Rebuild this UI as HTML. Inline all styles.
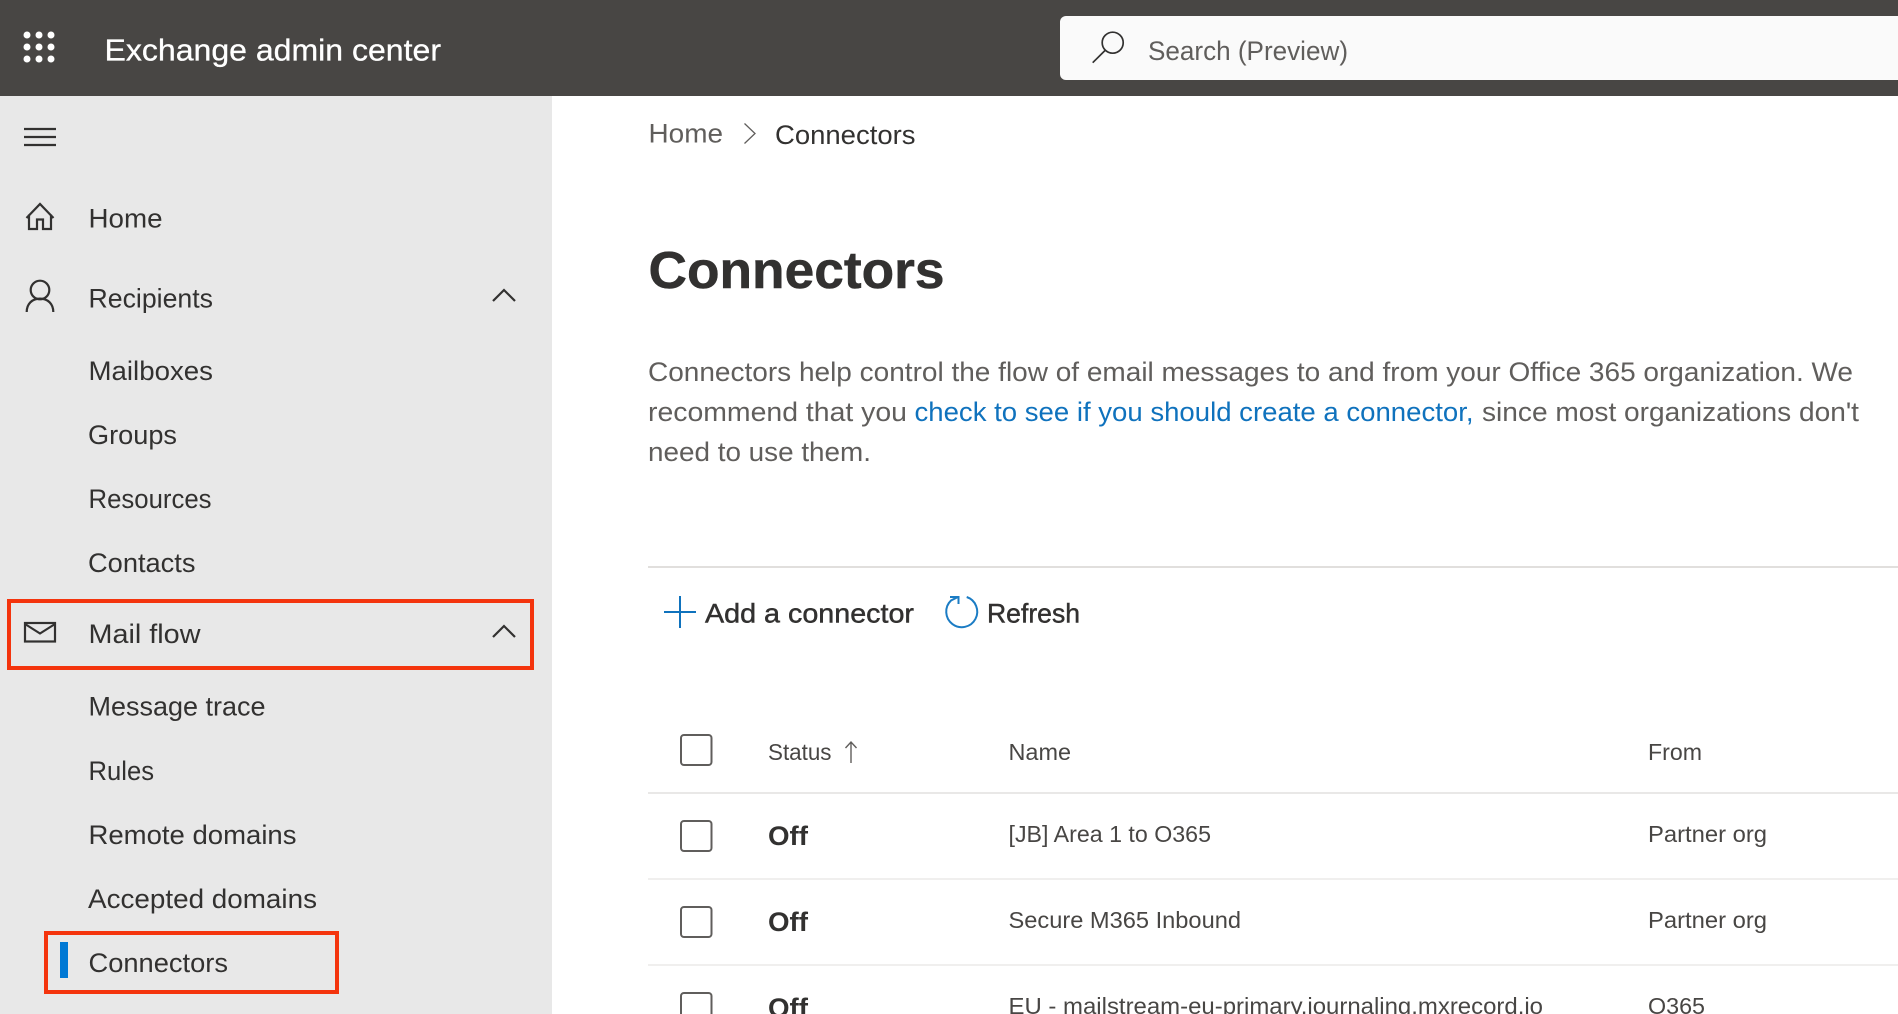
<!DOCTYPE html>
<html><head><meta charset="utf-8"><title>Exchange admin center</title>
<style>
html,body{margin:0;padding:0;background:#fff;width:1898px;height:1014px;overflow:hidden}
svg{display:block;position:absolute;left:0;top:0;filter:blur(.35px)}
text{font-family:"Liberation Sans",sans-serif;white-space:pre}
.n{font-size:27px;fill:#323130}
.p{font-size:26.5px;fill:#605e5c}
.t{font-size:23.5px;fill:#484644}
.s{font-size:27px;fill:#323130;stroke:#323130;stroke-width:.45}
.i{fill:none;stroke:#323130;stroke-width:2.2}
</style></head><body>
<svg width="1898" height="1014" viewBox="0 0 1898 1014" xmlns="http://www.w3.org/2000/svg">
<rect width="1898" height="1014" fill="#fff"/>
<rect width="1898" height="96" fill="#484644"/>
<rect y="96" width="552" height="918" fill="#e8e8e8"/>
<g fill="#fff"><circle cx="27" cy="35" r="3.5"/><circle cx="39" cy="35" r="3.5"/><circle cx="51" cy="35" r="3.5"/><circle cx="27" cy="47" r="3.5"/><circle cx="39" cy="47" r="3.5"/><circle cx="51" cy="47" r="3.5"/><circle cx="27" cy="59" r="3.5"/><circle cx="39" cy="59" r="3.5"/><circle cx="51" cy="59" r="3.5"/></g>
<text x="104.5" y="60.5" font-size="31" fill="#fff" stroke="#fff" stroke-width=".3" textLength="336.5" lengthAdjust="spacingAndGlyphs">Exchange admin center</text>
<path d="M1898 16H1066a6 6 0 0 0-6 6v52a6 6 0 0 0 6 6h832z" fill="#fafafa"/>
<circle cx="1112.7" cy="42.7" r="10.5" fill="none" stroke="#323130" stroke-width="1.7"/>
<path d="M1105 50.5L1092.7 62.7" fill="none" stroke="#323130" stroke-width="1.7"/>
<text x="1148" y="60" font-size="27" fill="#605e5c" textLength="200" lengthAdjust="spacingAndGlyphs">Search (Preview)</text>

<path d="M24 129H56M24 137H56M24 145H56" class="i"/>
<path d="M26.5 218L40 204L53.5 218M29 214.5V229H37V219.5H43V229H51V214.5" class="i"/>
<text class="n" x="88.5" y="227.5" textLength="74" lengthAdjust="spacingAndGlyphs">Home</text>
<circle cx="40" cy="290" r="9.3" class="i"/>
<path d="M26.7 312C26.7 304 32 298.6 40 298.6C48 298.6 53.3 304 53.3 312" class="i"/>
<text class="n" x="88.5" y="307.5" textLength="124.5" lengthAdjust="spacingAndGlyphs">Recipients</text>
<path d="M493 301L504 290L515 301" class="i"/>
<text class="n" x="88.5" y="380" textLength="124.5" lengthAdjust="spacingAndGlyphs">Mailboxes</text>
<text class="n" x="88" y="444" textLength="89" lengthAdjust="spacingAndGlyphs">Groups</text>
<text class="n" x="88.5" y="508" textLength="123" lengthAdjust="spacingAndGlyphs">Resources</text>
<text class="n" x="88" y="572" textLength="107.5" lengthAdjust="spacingAndGlyphs">Contacts</text>
<rect x="9" y="601" width="523" height="67" fill="none" stroke="#f4340d" stroke-width="4"/>
<rect x="25" y="623" width="30" height="18.5" class="i"/>
<path d="M25 624L40 633.5L55 624" class="i"/>
<text class="n" x="88.5" y="643" textLength="112" lengthAdjust="spacingAndGlyphs">Mail flow</text>
<path d="M493 637L504 626L515 637" class="i"/>
<text class="n" x="88.5" y="715.5" textLength="177" lengthAdjust="spacingAndGlyphs">Message trace</text>
<text class="n" x="88.5" y="780" textLength="65.5" lengthAdjust="spacingAndGlyphs">Rules</text>
<text class="n" x="88.5" y="844" textLength="208" lengthAdjust="spacingAndGlyphs">Remote domains</text>
<text class="n" x="88" y="908" textLength="229" lengthAdjust="spacingAndGlyphs">Accepted domains</text>
<rect x="46" y="933" width="291" height="59" fill="none" stroke="#f4340d" stroke-width="4"/>
<rect x="60" y="942" width="8" height="36" fill="#0078d4"/>
<text class="n" x="88.5" y="972" textLength="139.5" lengthAdjust="spacingAndGlyphs">Connectors</text>

<text x="648.5" y="142.5" font-size="27" fill="#605e5c" textLength="74.5" lengthAdjust="spacingAndGlyphs">Home</text>
<path d="M744.5 123.5L755 133.5L744.5 143.5" fill="none" stroke="#605e5c" stroke-width="1.3"/>
<text x="775" y="144" font-size="27" fill="#323130" textLength="140.5" lengthAdjust="spacingAndGlyphs">Connectors</text>
<text x="648.5" y="288" font-size="52" font-weight="700" fill="#323130" stroke="#323130" stroke-width=".5" textLength="296" lengthAdjust="spacingAndGlyphs">Connectors</text>

<text class="p" x="648" y="381" textLength="1205" lengthAdjust="spacingAndGlyphs">Connectors help control the flow of email messages to and from your Office 365 organization. We</text>
<text class="p" x="648" y="421" textLength="259" lengthAdjust="spacingAndGlyphs">recommend that you</text>
<text class="p" style="fill:#0f72bd" x="914.5" y="421" textLength="559" lengthAdjust="spacingAndGlyphs">check to see if you should create a connector,</text>
<text class="p" x="1482" y="421" textLength="377" lengthAdjust="spacingAndGlyphs">since most organizations don't</text>
<text class="p" x="648" y="461" textLength="223" lengthAdjust="spacingAndGlyphs">need to use them.</text>

<rect x="648" y="566" width="1250" height="2" fill="#e1dfdd"/>
<path d="M664 612H696M680 596V628" fill="none" stroke="#0f72bd" stroke-width="2"/>
<text class="s" x="705" y="622.5" textLength="209" lengthAdjust="spacingAndGlyphs">Add a connector</text>
<path d="M966.7 597A15.5 15.5 0 1 1 951 600.5L958 597" fill="none" stroke="#1b7cc4" stroke-width="2"/>
<path d="M950 597H958.5V604" fill="none" stroke="#1b7cc4" stroke-width="2"/>
<text class="s" x="987" y="622.5" textLength="93" lengthAdjust="spacingAndGlyphs">Refresh</text>

<g fill="none" stroke="#605e5c" stroke-width="2">
<rect x="681" y="735" width="30.5" height="30" rx="3"/>
<rect x="681" y="821" width="30.5" height="30" rx="3"/>
<rect x="681" y="907" width="30.5" height="30" rx="3"/>
<rect x="681" y="993" width="30.5" height="30" rx="3"/>
</g>
<text class="t" x="768" y="760" textLength="63.5" lengthAdjust="spacingAndGlyphs">Status</text>
<path d="M851 742V763M845.5 748L851 742L856.5 748" fill="none" stroke="#605e5c" stroke-width="1.4"/>
<text class="t" x="1008.5" y="760" textLength="62.5" lengthAdjust="spacingAndGlyphs">Name</text>
<text class="t" x="1648" y="760" textLength="54" lengthAdjust="spacingAndGlyphs">From</text>
<rect x="648" y="792" width="1250" height="2" fill="#e9e8e7"/>
<rect x="648" y="878" width="1250" height="2" fill="#f0efee"/>
<rect x="648" y="964" width="1250" height="2" fill="#f0efee"/>

<g font-size="27" font-weight="700" fill="#323130">
<text x="768" y="845" textLength="40" lengthAdjust="spacingAndGlyphs">Off</text>
<text x="768" y="931" textLength="40" lengthAdjust="spacingAndGlyphs">Off</text>
<text x="768" y="1017" textLength="40" lengthAdjust="spacingAndGlyphs">Off</text>
</g>
<text class="t" x="1008.5" y="842" textLength="202.5" lengthAdjust="spacingAndGlyphs">[JB] Area 1 to O365</text>
<text class="t" x="1008.5" y="928" textLength="232.5" lengthAdjust="spacingAndGlyphs">Secure M365 Inbound</text>
<text class="t" x="1008.5" y="1014" textLength="534.5" lengthAdjust="spacingAndGlyphs">EU - mailstream-eu-primary.journaling.mxrecord.io</text>
<text class="t" x="1648" y="842" textLength="119" lengthAdjust="spacingAndGlyphs">Partner org</text>
<text class="t" x="1648" y="928" textLength="119" lengthAdjust="spacingAndGlyphs">Partner org</text>
<text class="t" x="1648" y="1014" textLength="57" lengthAdjust="spacingAndGlyphs">O365</text>
</svg>
</body></html>
